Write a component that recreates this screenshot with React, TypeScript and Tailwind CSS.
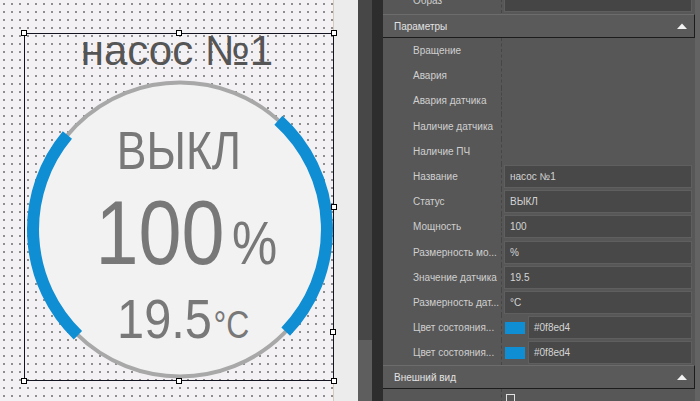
const params = [
  { label: "Вращение" },
  { label: "Авария" },
  { label: "Авария датчика" },
  { label: "Наличие датчика" },
  { label: "Наличие ПЧ" },
  { label: "Название", value: "насос №1" },
  { label: "Статус", value: "ВЫКЛ" },
  { label: "Мощность", value: "100" },
  { label: "Размерность мо...", value: "%" },
  { label: "Значение датчика", value: "19.5" },
  { label: "Размерность дат...", value: "°C" },
  { label: "Цвет состояния...", value: "#0f8ed4", color: true },
  { label: "Цвет состояния...", value: "#0f8ed4", color: true },
];

const Handle = ({ className }: { className: string }) => (
  <div className={`absolute w-[6px] h-[6px] bg-white border border-black ${className}`} />
);

const Arrow = () => (
  <svg width="10" height="6" viewBox="0 0 10 6" className="mr-[7px]">
    <path d="M0 6 L5 0.5 L10 6 Z" fill="#f2f2f2" />
  </svg>
);

const Gauge = () => {
  return (
    <div className="relative w-[310px] h-[348px] border border-[#141420]">
      <svg
        className="absolute inset-0 overflow-visible"
        width="308"
        height="346"
        viewBox="0 0 308 346"
      >
        <circle cx="155" cy="195.5" r="147" fill="#f2f2f2" stroke="#a8a8a8" strokeWidth="4" />
        <path d="M42.4 101 A147 147 0 0 0 52.9 301.2" fill="none" stroke="#0f8ed4" strokeWidth="12" />
        <path d="M253.4 86.3 A147 147 0 0 1 260.7 297.6" fill="none" stroke="#0f8ed4" strokeWidth="12" />
      </svg>

      <div className="relative flex flex-col items-center font-['Liberation_Sans',Arial,sans-serif]">
        <div className="h-[37px] leading-[34px] text-[42px] text-[#555555] pr-[4px] whitespace-nowrap">
          насос №1
        </div>
        <div className="mt-[53px] h-[53px] leading-[53px] text-[53px] text-[#787878] scale-x-[0.84]">
          ВЫКЛ
        </div>
        <div className="mt-[10px] h-[92px] leading-[92px] flex items-baseline text-[#787878] pl-[8px]">
          <span className="text-[91px] inline-block scale-x-[0.85]">100</span>
          <span className="text-[62px] inline-block scale-x-[0.82] -ml-[8px]">%</span>
        </div>
        <div className="mt-[12px] h-[56px] leading-[56px] flex items-baseline text-[#787878] pl-[4px]">
          <span className="text-[56px] inline-block scale-x-[0.87]">19.5</span>
          <span className="text-[38px] inline-block scale-x-[0.84] -ml-[9px]">°C</span>
        </div>
      </div>

      <Handle className="-left-[4px] -top-[4px]" />
      <Handle className="left-[151px] -top-[4px]" />
      <Handle className="-right-[4px] -top-[4px]" />
      <Handle className="-right-[4px] top-[170px]" />
      <Handle className="-right-[3px] top-[295px]" />
      <Handle className="-left-[4px] -bottom-[4px]" />
      <Handle className="left-[151px] -bottom-[4px]" />
      <Handle className="-right-[4px] -bottom-[4px]" />
    </div>
  );
};

const Row = ({ item }: { item: any }) => {
  return (
    <div className="flex h-[25.2px] shrink-0">
      <div className="w-[119px] pl-[30px] flex items-center border-r border-dashed border-[#464646] text-[#cfcfcf] whitespace-nowrap overflow-hidden">
        {item.label}
      </div>
      <div className="flex-1 flex items-center pl-[2px] pr-[3px]">
        {item.color ? (
          <>
            <div className="w-[20px] h-[12px] bg-[#0f8ed4] ml-[1px]" />
            <div className="flex-1 ml-[3px] h-[23px] flex items-center pl-[5px] bg-[#484848] border border-[#5f5f5f] text-[#d4d4d4]">
              {item.value}
            </div>
          </>
        ) : item.value ? (
          <div className="flex-1 h-[23px] flex items-center pl-[5px] bg-[#484848] border border-[#5f5f5f] text-[#d4d4d4]">
            {item.value}
          </div>
        ) : null}
      </div>
    </div>
  );
};

const Header = ({ title }: { title: string }) => (
  <div className="h-[24px] shrink-0 flex items-center justify-between pl-[11px] bg-[#5a5a5a] border-t border-t-[#6c6c6c] border-b border-b-[#1c1c1c] border-r border-r-[#1c1c1c] text-[#e2e2e2]">
    <span>{title}</span>
    <Arrow />
  </div>
);

const App = () => {
  return (
    <div className="w-[700px] h-[401px] flex overflow-hidden bg-[#575757]">
      <div className="w-[334px] h-full shrink-0 pl-[24px] pt-[33px] bg-[#f4f1f5] bg-[radial-gradient(#8a8a8a_0.7px,transparent_0.9px)] bg-[length:8px_8px] border-r border-[#d6c9bd]">
        <Gauge />
      </div>
      <div className="w-[24px] shrink-0 bg-[#ececec]" />
      <div className="w-[14px] shrink-0 flex flex-col bg-[#474747]">
        <div className="h-[340px]" />
        <div className="flex-1 bg-[#5e5e5e]" />
      </div>
      <div className="w-[11px] shrink-0 bg-[#2d2d2d]" />

      <div className="flex-1 flex font-['Liberation_Sans',Arial,sans-serif] text-[10px]">
        <div className="flex-1 flex flex-col">
          <div className="flex h-[25px] -mt-[12px] shrink-0">
            <div className="w-[119px] pl-[30px] flex items-center border-r border-dashed border-[#464646] text-[#cfcfcf]">
              Образ
            </div>
            <div className="flex-1 flex items-center pl-[2px] pr-[3px]">
              <div className="flex-1 h-[23px] bg-[#454545] border border-[#5f5f5f]" />
            </div>
          </div>
          <div className="mt-[1px] shrink-0">
            <Header title="Параметры" />
          </div>
          {params.map((item, idx) => (
            <Row item={item} key={idx} />
          ))}
          <Header title="Внешний вид" />
          <div className="flex h-[25px] shrink-0">
            <div className="w-[119px] border-r border-dashed border-[#464646]" />
            <div className="flex-1 pl-[4px] pt-[5px]">
              <div className="w-[9px] h-[9px] border border-[#e0e0e0]" />
            </div>
          </div>
        </div>
        <div className="w-[5px] bg-[#636363]" />
      </div>
    </div>
  );
};

export default App;
